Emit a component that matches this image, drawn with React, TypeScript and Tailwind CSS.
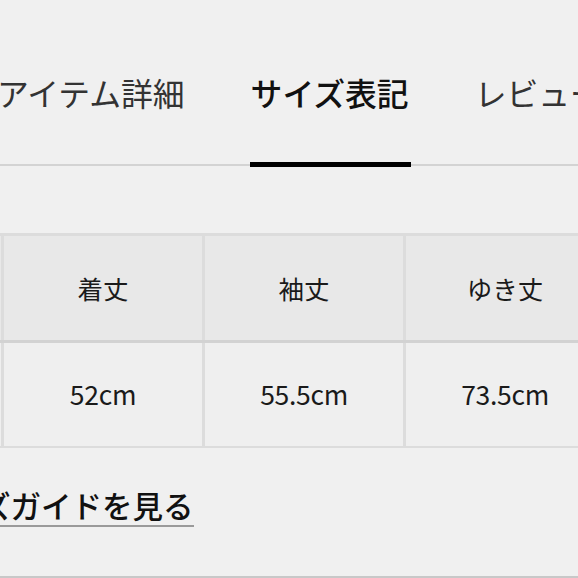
const tabs = [
  { label: 'アイテム詳細', active: false },
  { label: 'サイズ表記', active: true },
  { label: 'レビュー', active: false },
]

const heads = ['肩幅', '着丈', '袖丈', 'ゆき丈']
const values = ['46cm', '52cm', '55.5cm', '73.5cm']

export default function App() {
  return (
    <div className="flex h-[578px] w-[578px] flex-col overflow-hidden bg-[#f0f0f0] font-['Noto_Sans_CJK_JP',sans-serif] text-[#1a1a1a]">
      {/* Tabs */}
      <div className="mt-[77px] border-b-2 border-[#d3d3d3]">
        <div className="ml-[-3px] flex gap-[66px] whitespace-nowrap">
          {tabs.map((t) => (
            <div key={t.label} className="relative pb-[55px]">
              <span
                className={
                  t.active
                    ? 'block text-[31.8px] leading-none font-medium text-[#111]'
                    : 'block text-[31.8px] leading-none text-[#333]'
                }
              >
                {t.label}
              </span>
              {t.active && (
                <div className="absolute bottom-[-3px] left-[-1px] right-[-2px] h-[5px] bg-black" />
              )}
            </div>
          ))}
        </div>
      </div>

      {/* Size table */}
      <div className="mt-[67px] overflow-hidden">
        <div className="ml-[-197px] w-max bg-[#dcdcdc] pt-[3px] pb-[2px]">
          <div className="grid grid-cols-[198px_198px_198px_198px] gap-x-[3px]">
            {heads.map((h) => (
              <div key={h} className="flex h-[104px] items-center justify-center bg-[#e8e8e8] text-[25.5px]">
                {h}
              </div>
            ))}
          </div>
          <div className="h-[3px] bg-[#d2d2d2]" />
          <div className="grid grid-cols-[198px_198px_198px_198px] gap-x-[3px]">
            {values.map((v) => (
              <div key={v} className="flex h-[103px] items-center justify-center bg-[#efefef] text-[26.5px] tracking-[-0.3px]">
                {v}
              </div>
            ))}
          </div>
        </div>
      </div>

      {/* Guide link */}
      <div className="ml-[-80px] mt-[42px] whitespace-nowrap">
        <span className="inline-block border-b-2 border-[#9a9a9a] pb-[5px] text-[30.5px] leading-none font-medium text-[#111]">
          サイズガイドを見る
        </span>
      </div>

      <div className="mt-auto h-[2px] bg-[#c8c8c8]" />
    </div>
  )
}
